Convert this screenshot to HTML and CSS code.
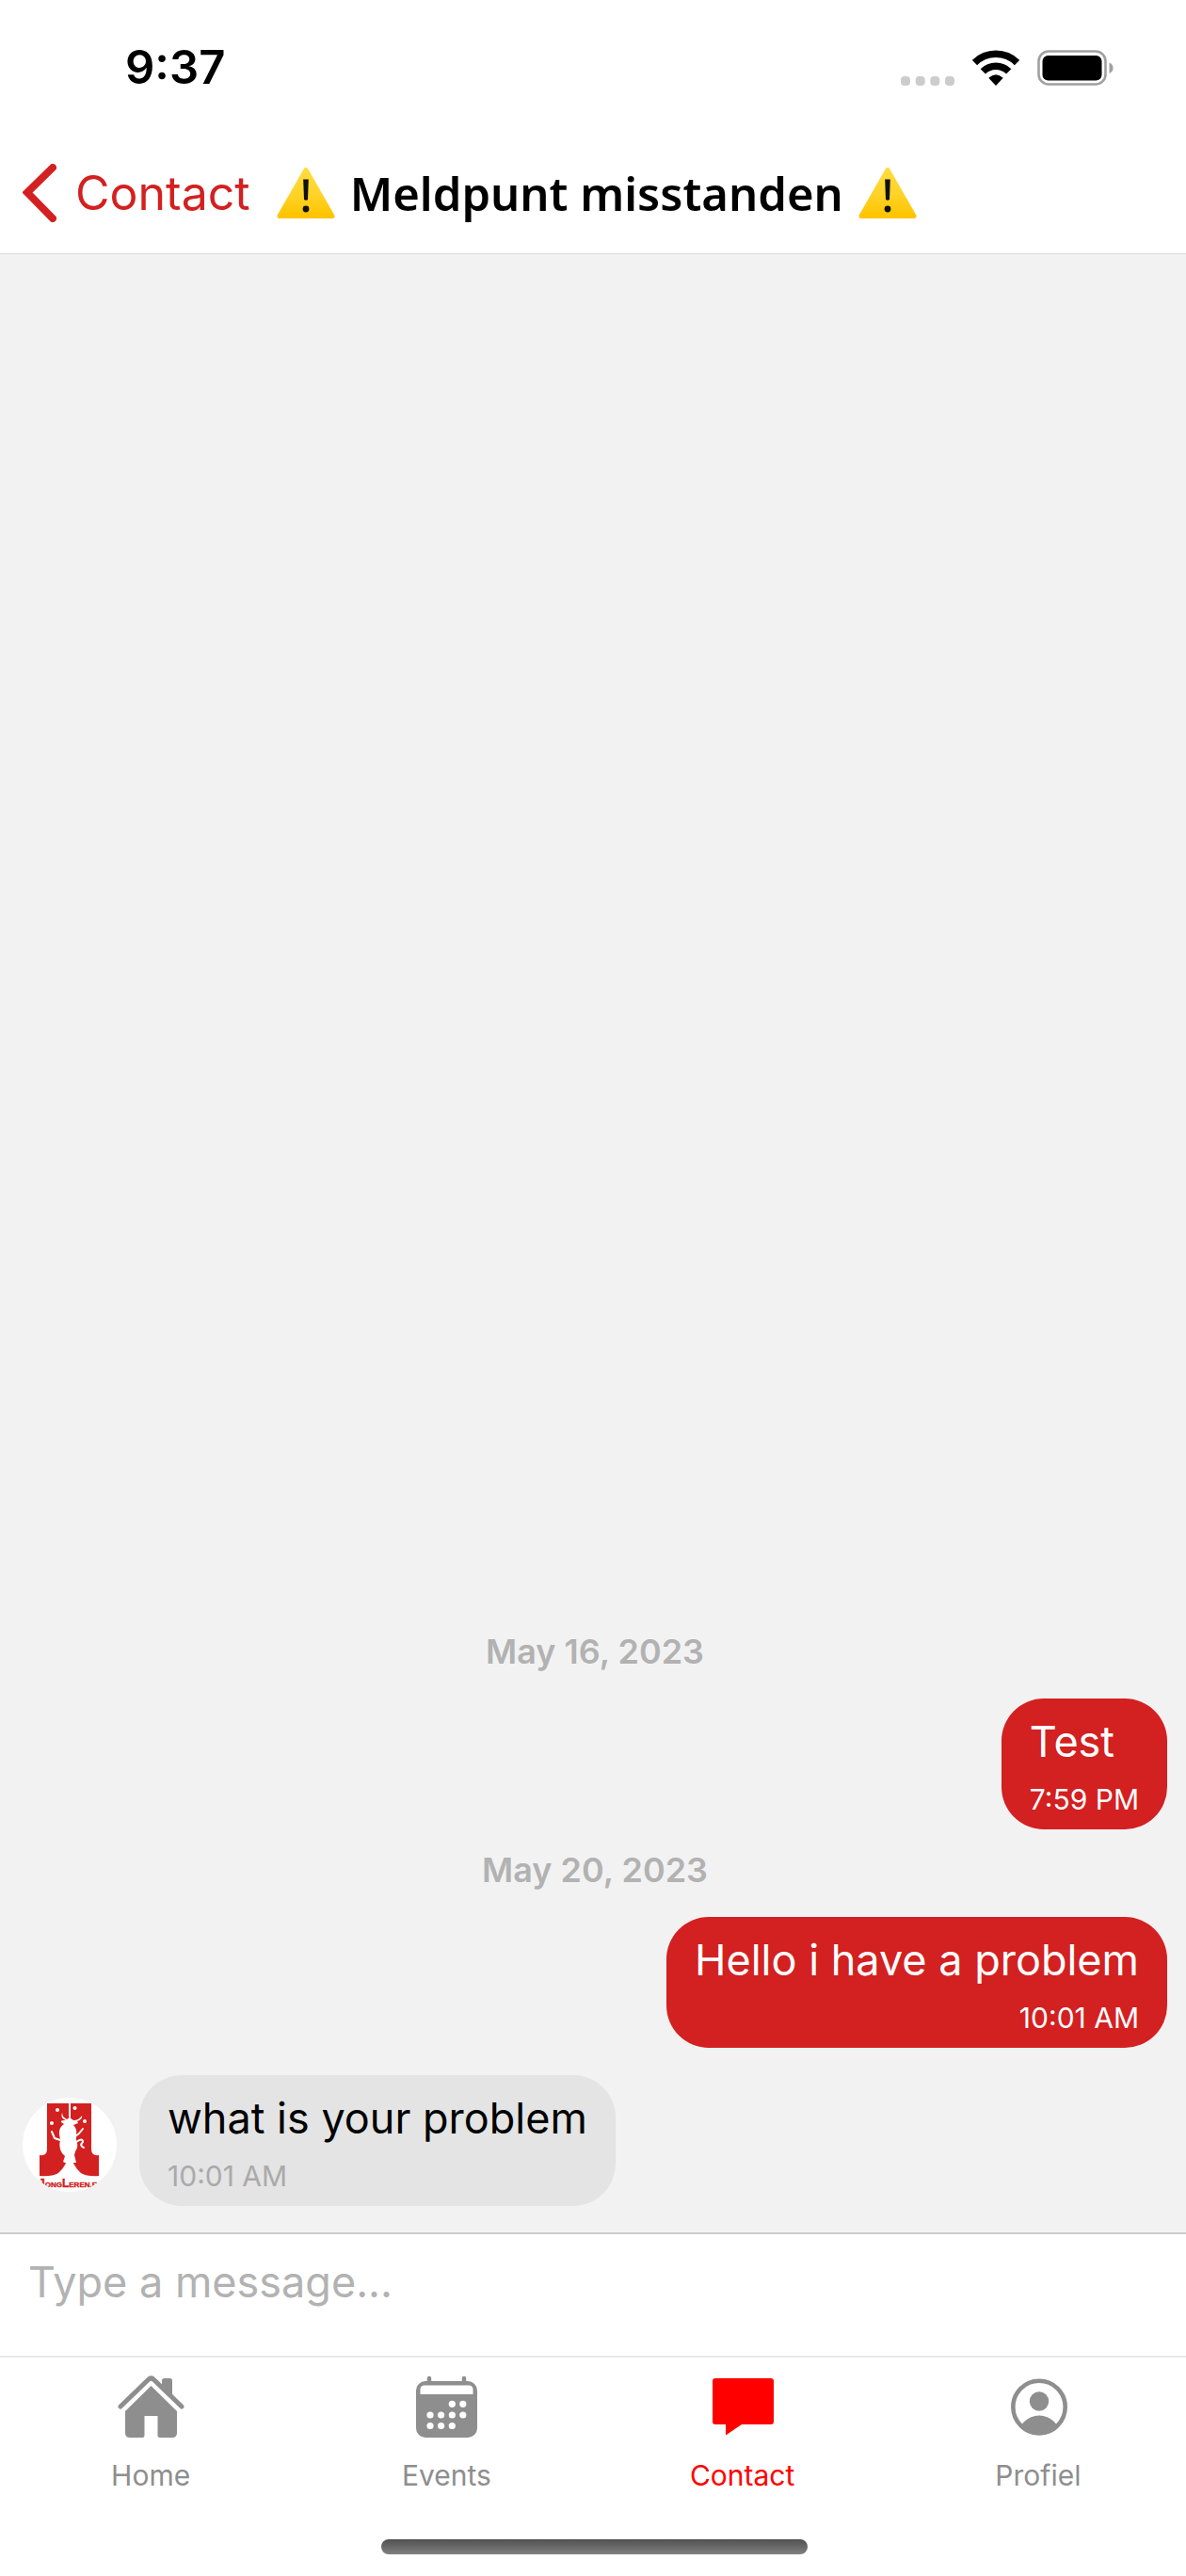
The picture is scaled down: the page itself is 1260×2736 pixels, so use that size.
FILE: index.html
```html
<!DOCTYPE html>
<html lang="nl">
<head>
<meta charset="utf-8">
<meta name="viewport" content="width=device-width">
<title>Meldpunt misstanden</title>
<link rel="stylesheet" href="styles.css">
</head>
<body>
<svg class="defs" aria-hidden="true">
  <defs>
    <linearGradient id="amber" x1="0" y1="0" x2="0" y2="1">
      <stop offset="0" stop-color="#ffdb3d"/>
      <stop offset=".5" stop-color="#ffd42a"/>
      <stop offset="1" stop-color="#ffc400"/>
    </linearGradient>
    <symbol id="warning" viewBox="0 0 62 56">
      <path d="M31 3.500 59 52.500H3Z" fill="url(#amber)" stroke="url(#amber)" stroke-width="5" stroke-linejoin="round"/>
      <path d="M28.200 13.500h5.600l-.8 21.500q-2 1.500-4 0Z" fill="#111"/>
      <circle cx="31" cy="45" r="3.400" fill="#111"/>
    </symbol>
  </defs>
</svg>

<div class="status-bar">
  <span class="clock">9:37</span>
  <div class="indicators">
    <svg class="signal" viewBox="0 0 57 38" fill="#ccc" aria-hidden="true">
      <rect x="0" y="28" width="10" height="10" rx="4"/><rect x="15.700" y="28" width="10" height="10" rx="4"/><rect x="31.300" y="28" width="10" height="10" rx="4"/><rect x="47" y="28" width="10" height="10" rx="4"/>
    </svg>
    <svg class="wifi" viewBox="0 0 50 38" aria-hidden="true">
      <g fill="none" stroke="#000" stroke-width="7.500">
        <path d="M2.500 13.500A32 32 0 0 1 47.500 13.500"/>
        <path d="M11.300 22.800A19.500 19.500 0 0 1 38.700 22.800"/>
      </g>
      <path d="M25 38 17.300 29.800Q25 22.800 32.700 29.800Z"/>
    </svg>
    <svg class="battery" viewBox="0 0 82 38" aria-hidden="true">
      <rect x="1.500" y="1.500" width="71" height="35" rx="10.500" fill="none" stroke="#a0a0a0" stroke-width="2.600"/>
      <rect x="5.500" y="6" width="63" height="26.500" rx="6" fill="#000"/>
      <path d="M76.500 13.500q4 1.500 4 5.700t-4 5.700Z" fill="#a0a0a0"/>
    </svg>
  </div>
</div>

<header class="nav">
  <a class="back" href="#contact">
    <svg class="chevron" viewBox="0 0 36 62" aria-hidden="true"><path d="M32 4 5 30.500 32 58" fill="none" stroke="#d32020" stroke-width="8" stroke-linecap="round"/></svg>
    <span>Contact</span>
  </a>
  <h1 class="title">
    <svg class="warning" aria-hidden="true"><use href="#warning"/></svg>
    <span>Meldpunt misstanden</span>
    <svg class="warning" aria-hidden="true"><use href="#warning"/></svg>
  </h1>
</header>

<main class="messages">
  <p class="day">May 16, 2023</p>
  <div class="row sent">
    <div class="bubble"><p class="text">Test</p><time class="time">7:59 PM</time></div>
  </div>
  <p class="day">May 20, 2023</p>
  <div class="row sent">
    <div class="bubble"><p class="text">Hello i have a problem</p><time class="time">10:01 AM</time></div>
  </div>
  <div class="row received">
    <svg class="avatar" viewBox="0 0 100 100" role="img" aria-label="Jongleren">
      <clipPath id="round"><circle cx="50" cy="50" r="50"/></clipPath>
      <g clip-path="url(#round)">
        <rect width="100" height="100" fill="#fff"/>
        <path d="M26 6H49V60Q47 72 38 80 31 84 18 83V61Q26 62 26 55ZM73 6H51V60Q53 72 62 80 69 84 81 83V61Q73 62 73 55Z" fill="#d32020"/>
        <g fill="#fff">
          <circle cx="37" cy="13" r="2"/><circle cx="55.500" cy="11" r="2"/><circle cx="31" cy="27" r="2"/><circle cx="66" cy="25" r="2"/>
          <path d="M42 16Q40 22 46 24 40 24 41 26L44 28Q38 32 39 39L40 45Q38 54 42 59L45 62 43 68 47 70 50 60 53 69 57 69 55 61 56 57Q60 52 57 45L57 39Q58 33 54 29L59 27 58 25Q64 23 63 19 60 24 54 24L50 21 47 23 43 20Z"/>
        </g>
        <g fill="none" stroke="#fff" stroke-width="2" stroke-linecap="round" stroke-linejoin="round">
          <path d="M31 36 34 43 40 45M56 41 60 38 64 33M57 47Q64 42 64 47 60 51 65 53"/>
        </g>
        <text class="logo-text" x="17" y="95"><tspan>J</tspan>ONG<tspan>L</tspan>EREN.ES</text>
      </g>
    </svg>
    <div class="bubble"><p class="text">what is your problem</p><time class="time">10:01 AM</time></div>
  </div>
</main>

<form class="composer">
  <input class="message-input" type="text" placeholder="Type a message..." aria-label="Message">
</form>

<footer class="bottom">
  <nav class="tabs">
    <a class="tab" href="#home">
      <svg class="icon" viewBox="0 0 72 72" fill="currentColor" aria-hidden="true">
        <path d="M48 16V8.500Q48 6 50.500 6H56.500Q59 6 59 8.500V28Z"/>
        <path d="M4 36 33.500 7.500Q36.500 4.500 39.500 7.500L69 36" fill="none" stroke="currentColor" stroke-width="5" stroke-linecap="round"/>
        <path d="M36.500 14 64 41V64Q64 69 59 69H46Q43.500 69 43.500 66.500V46H29.500V66.500Q29.500 69 27 69H14Q9 69 9 64V41Z"/>
      </svg>
      <span>Home</span>
    </a>
    <a class="tab" href="#events">
      <svg class="icon" viewBox="0 0 72 72" aria-hidden="true">
        <rect x="4" y="9" width="65" height="60" rx="10" fill="currentColor"/>
        <path d="M18 11V6M55 11V6" stroke="currentColor" stroke-width="4.500" stroke-linecap="round"/>
        <g fill="#fff">
          <path d="M8.500 23V18Q8.500 13.500 13 13.500H60Q64.500 13.500 64.500 18V23Z"/>
          <circle cx="42.300" cy="33.300" r="3.600"/><circle cx="53.800" cy="33.300" r="3.600"/>
          <circle cx="19" cy="45" r="3.600"/><circle cx="30.600" cy="45" r="3.600"/><circle cx="42.300" cy="45" r="3.600"/><circle cx="53.800" cy="45" r="3.600"/>
          <circle cx="19" cy="56.500" r="3.600"/><circle cx="30.600" cy="56.500" r="3.600"/><circle cx="42.300" cy="56.500" r="3.600"/>
        </g>
      </svg>
      <span>Events</span>
    </a>
    <a class="tab active" href="#contact">
      <svg class="icon" viewBox="0 0 72 72" fill="currentColor" aria-hidden="true"><path d="M7 6H66Q69 6 69 9V52Q69 55 66 55H35L18 66.500V55H7Q4 55 4 52V9Q4 6 7 6Z"/></svg>
      <span>Contact</span>
    </a>
    <a class="tab" href="#profiel">
      <svg class="icon" viewBox="0 0 72 72" aria-hidden="true">
        <clipPath id="disc"><circle cx="37" cy="36.500" r="30"/></clipPath>
        <circle cx="37" cy="36.500" r="27.700" fill="none" stroke="currentColor" stroke-width="4.600"/>
        <circle cx="37" cy="30.500" r="10.200" fill="currentColor"/>
        <circle cx="37" cy="68" r="22.500" fill="currentColor" clip-path="url(#disc)"/>
      </svg>
      <span>Profiel</span>
    </a>
  </nav>
  <div class="home-indicator"></div>
</footer>
</body>
</html>
```
FILE: styles.css
```css
* {
  box-sizing: border-box;
}

body {
  margin: 0;
  min-height: 100vh;
  display: flex;
  flex-direction: column;
  background: #fff;
  color: #000;
  font-family: Inter, "Liberation Sans", sans-serif;
  font-size: 45px;
  line-height: 60px;
}

p,
h1 {
  margin: 0;
}

a {
  color: inherit;
  text-decoration: none;
}

svg {
  display: block;
  flex: none;
}

.defs {
  position: absolute;
  width: 0;
  height: 0;
}

.status-bar {
  display: flex;
  justify-content: space-between;
  align-items: center;
  padding: 42px 76px 42px 133px;
}

.clock {
  font-size: 49px;
  font-weight: 600;
}

.indicators {
  display: flex;
  gap: 19px;
}

.signal {
  width: 57px;
  height: 38px;
}

.wifi {
  width: 50px;
  height: 38px;
}

.battery {
  width: 82px;
  height: 38px;
}

.nav {
  display: flex;
  align-items: center;
  gap: 28px;
  padding: 31px 24px 34px;
  border-bottom: 1px solid #d8d8d8;
}

.back {
  display: flex;
  align-items: center;
  gap: 20px;
  height: 60px;
  color: #d32020;
  font-size: 50px;
}

.chevron {
  width: 36px;
  height: 62px;
}

.title {
  display: flex;
  align-items: center;
  gap: 16px;
  height: 60px;
  font-family: "Noto Sans", "Open Sans", sans-serif;
  font-size: 49px;
  font-weight: 600;
  white-space: nowrap;
}

.warning {
  width: 62px;
  height: 56px;
}

.messages {
  flex: 1;
  display: flex;
  flex-direction: column;
  justify-content: flex-end;
  padding: 28px 20px 28px 24px;
  background: #f2f2f2;
}

.day {
  margin: 21px 0 28px;
  color: #b2b2b2;
  font-size: 36px;
  font-weight: 600;
  line-height: 44px;
  text-align: center;
}

.row {
  display: flex;
}

.sent {
  justify-content: flex-end;
}

.received {
  align-items: flex-end;
  gap: 24px;
  margin-top: 29px;
}

.bubble {
  display: flex;
  flex-direction: column;
  gap: 13px;
  padding: 16px 30px 14px;
  border-radius: 45px;
  background: #e4e4e4;
}

.sent .bubble {
  background: #d32020;
  color: #fff;
}

.time {
  color: #aaa;
  font-size: 30px;
  line-height: 36px;
}

.sent .time {
  color: #fff;
  text-align: right;
}

.avatar {
  width: 100px;
  height: 100px;
  margin-bottom: 15px;
}

.logo-text {
  fill: #d32020;
  stroke: #d32020;
  stroke-width: .4px;
  font: 700 8px "Liberation Sans", sans-serif;
}

.logo-text tspan {
  font-size: 12px;
}

.composer {
  padding: 21px 30px 48px;
  border-top: 2px solid #ccc;
}

.message-input {
  display: block;
  width: 100%;
  height: 60px;
  padding: 0;
  border: 0;
  outline: 0;
  background: none;
  color: #000;
  font: inherit;
}

.message-input::placeholder {
  color: #b2b2b2;
  opacity: 1;
}

.bottom {
  border-top: 2px solid #e8e8e8;
  padding: 16px 0 23px 3px;
}

.tabs {
  display: grid;
  grid-template-columns: repeat(4, 1fr);
}

.tab {
  display: flex;
  flex-direction: column;
  align-items: center;
  gap: 19px;
  color: #8e8e8e;
  font-size: 30px;
  line-height: 36px;
}

.tab.active {
  color: #f00;
}

.icon {
  width: 72px;
  height: 72px;
}

.home-indicator {
  width: 36%;
  height: 16px;
  margin: 50px auto 0;
  border-radius: 8px;
  background: linear-gradient(#505050, #808080);
}
```
